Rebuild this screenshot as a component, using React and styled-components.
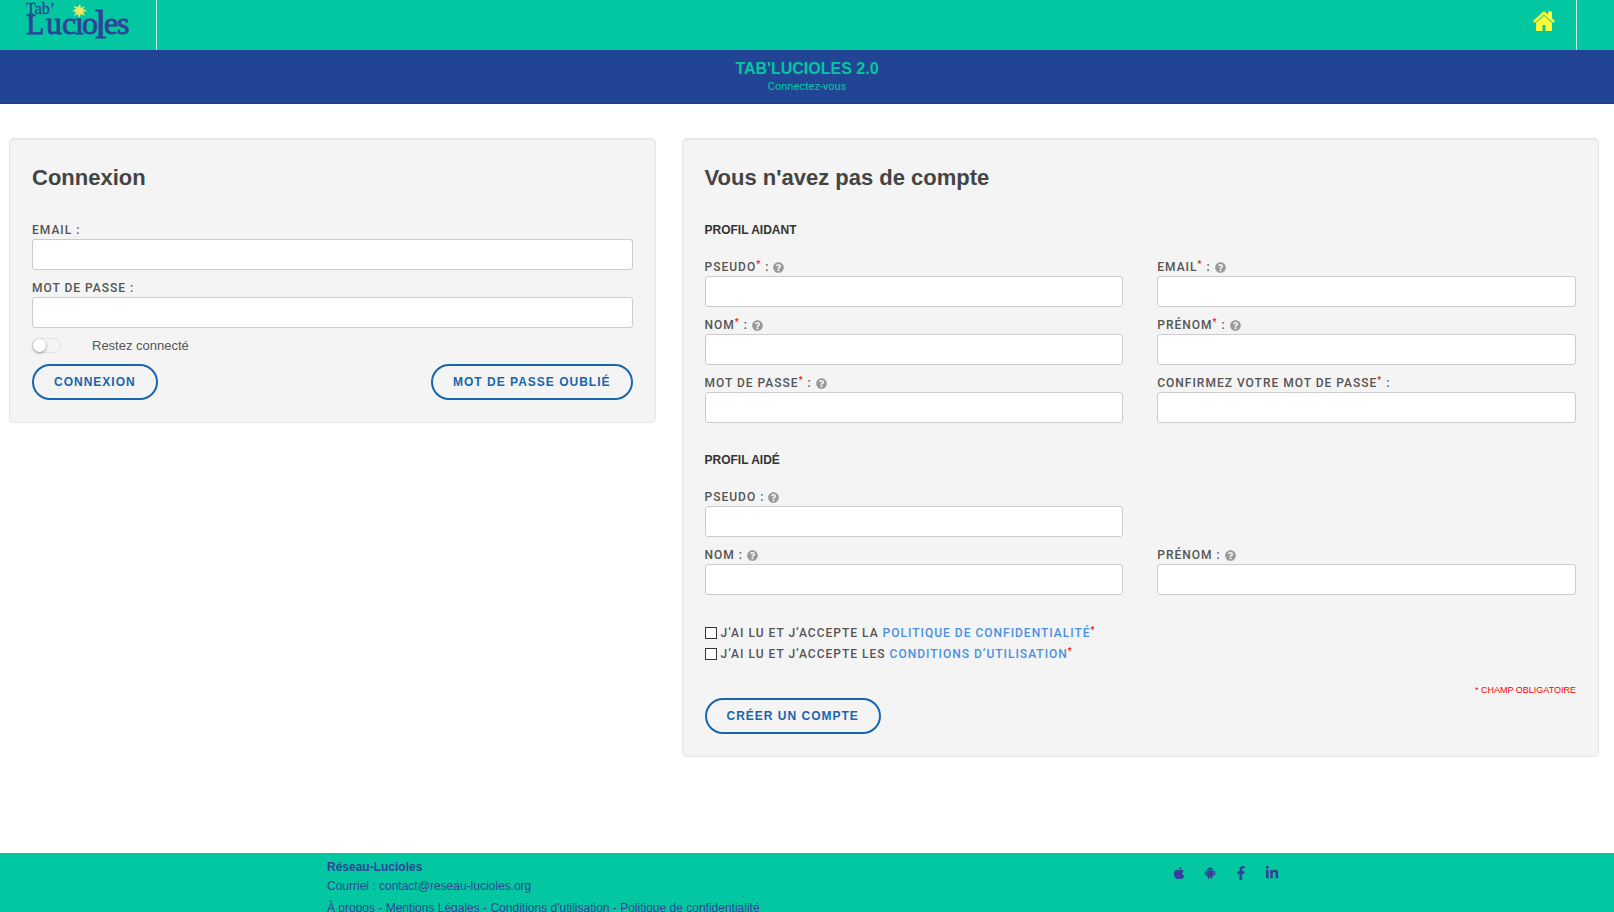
import React from 'react';
import styled, { createGlobalStyle } from 'styled-components';
import { FaApple, FaFacebookF, FaLinkedinIn, FaQuestionCircle } from 'react-icons/fa';
import { AiFillAndroid } from 'react-icons/ai';

const aidantFields = [
  { id: 'aidant-pseudo', label: 'Pseudo', required: true, help: true },
  { id: 'aidant-email', label: 'Email', type: 'email', required: true, help: true },
  { id: 'aidant-nom', label: 'Nom', required: true, help: true },
  { id: 'aidant-prenom', label: 'Prénom', required: true, help: true },
  { id: 'aidant-password', label: 'Mot de passe', type: 'password', required: true, help: true },
  { id: 'aidant-confirm', label: 'Confirmez votre mot de passe', type: 'password', required: true },
];

const aideFields = [
  { id: 'aide-pseudo', label: 'Pseudo', help: true, alone: true },
  { id: 'aide-nom', label: 'Nom', help: true },
  { id: 'aide-prenom', label: 'Prénom', help: true },
];

const Logo = () => (
  <svg width="112" height="46" viewBox="0 0 112 46" role="img" aria-label="Tab'Lucioles">
    <g fill="#2f4199" stroke="#2f4199" strokeWidth="0.8" fontFamily="'Liberation Serif', serif">
      <text x="0" y="14" fontSize="16" strokeWidth="0.3">Tab’</text>
      <text x="0" y="34" fontSize="32">
        <tspan fontSize="30">L</tspan>
        <tspan x="20">u</tspan>
        <tspan x="36">c</tspan>
        <tspan x="49">ı</tspan>
        <tspan x="56">o</tspan>
        <tspan x="69" y="38" fontSize="41">l</tspan>
        <tspan x="78" y="34">e</tspan>
        <tspan x="91">s</tspan>
      </text>
    </g>
    <path
      d="M54 4l1 4 4-2-2 3 4 2-4 1 2 4-4-2-2 4-1-4-4 2 2-4-4-1 4-2-3-3 5 1z"
      fill="#e6ea68"
    />
  </svg>
);

const HomeIcon = () => (
  <svg width="22" height="20" viewBox="0 0 22 20" fill="#fdff38" aria-hidden="true">
    <path d="M11 0L0 10l1.500 2L11 3.800 20.500 12 22 10 19 7.200V0.500h-4v3.200z" />
    <path d="M11 4.800L3 11.800V20h6.500v-6h3v6H19v-8.200z" />
  </svg>
);

const Field = ({ id, label, type = 'text', required, help, alone }) => (
  <FieldGroup $alone={alone}>
    <FieldLabel htmlFor={id}>
      <span>
        {label}
        {required && <Star>*</Star>} :
      </span>
      {help && <HelpIcon aria-label="Aide" />}
    </FieldLabel>
    <Input id={id} type={type} />
  </FieldGroup>
);

const App = () => {
  return (
    <>
      <GlobalStyle />
      <Header>
        <LogoLink href="#">
          <Logo />
        </LogoLink>
        <HomeLink href="#" aria-label="Accueil">
          <HomeIcon />
        </HomeLink>
      </Header>
      <Banner>
        <BannerTitle>TAB'LUCIOLES 2.0</BannerTitle>
        <BannerText>Connectez-vous</BannerText>
      </Banner>

      <Main>
        <LoginColumn>
          <Panel>
            <PanelTitle>Connexion</PanelTitle>
            <Field id="login-email" label="Email" type="email" />
            <Field id="login-password" label="Mot de passe" type="password" />
            <StayRow>
              <Toggle id="stay" type="checkbox" />
              <label htmlFor="stay">Restez connecté</label>
            </StayRow>
            <ButtonRow>
              <Button type="button">Connexion</Button>
              <Button type="button">Mot de passe oublié</Button>
            </ButtonRow>
          </Panel>
        </LoginColumn>

        <SignupColumn>
          <Panel>
            <PanelTitle>Vous n'avez pas de compte</PanelTitle>
            <ProfileTitle>Profil aidant</ProfileTitle>
            <FieldGrid>
              {aidantFields.map((field) => (
                <Field key={field.id} {...field} />
              ))}
            </FieldGrid>
            <ProfileTitle $spaced>Profil aidé</ProfileTitle>
            <FieldGrid>
              {aideFields.map((field) => (
                <Field key={field.id} {...field} />
              ))}
            </FieldGrid>
            <Consents>
              <ConsentRow>
                <Checkbox id="privacy" type="checkbox" />
                <ConsentLabel htmlFor="privacy">
                  J‘ai lu et j‘accepte la <TextLink href="#">politique de confidentialité</TextLink>
                  <Star>*</Star>
                </ConsentLabel>
              </ConsentRow>
              <ConsentRow>
                <Checkbox id="terms" type="checkbox" />
                <ConsentLabel htmlFor="terms">
                  J‘ai lu et j‘accepte les <TextLink href="#">conditions d‘utilisation</TextLink>
                  <Star>*</Star>
                </ConsentLabel>
              </ConsentRow>
            </Consents>
            <RequiredNote>* Champ obligatoire</RequiredNote>
            <Button type="button">Créer un compte</Button>
          </Panel>
        </SignupColumn>
      </Main>

      <Footer>
        <FooterInner>
          <div>
            <FooterName>Réseau-Lucioles</FooterName>
            <FooterLine>
              Courriel : <a href="mailto:contact@reseau-lucioles.org">contact@reseau-lucioles.org</a>
            </FooterLine>
            <FooterLine>
              <a href="#">À propos</a> - <a href="#">Mentions Légales</a> -{' '}
              <a href="#">Conditions d'utilisation</a> - <a href="#">Politique de confidentialité</a>
            </FooterLine>
          </div>
          <Socials>
            <SocialLink href="#" aria-label="Apple">
              <FaApple />
            </SocialLink>
            <SocialLink href="#" aria-label="Android">
              <AiFillAndroid />
            </SocialLink>
            <SocialLink href="#" aria-label="Facebook">
              <FaFacebookF />
            </SocialLink>
            <SocialLink href="#" aria-label="LinkedIn">
              <FaLinkedinIn />
            </SocialLink>
          </Socials>
        </FooterInner>
      </Footer>
    </>
  );
};

export default App;

const GlobalStyle = createGlobalStyle`
  * {
    box-sizing: border-box;
  }

  html {
    scrollbar-width: none;
  }

  body {
    margin: 0;
    background: #fff;
    color: #555;
    font-family: 'Liberation Sans', Arial, sans-serif;
    font-size: 13px;
  }

  a {
    color: inherit;
    text-decoration: none;
  }
`;

const Header = styled.header`
  display: flex;
  justify-content: space-between;
  height: 50px;
  padding-right: 37px;
  background: #02c7a1;
`;

const LogoLink = styled.a`
  display: flex;
  width: 157px;
  padding-left: 26px;
  border-right: 1px solid #c4ece2;
`;

const HomeLink = styled.a`
  padding: 11px 21px 0;
  border-right: 1px solid #c4ece2;
`;

const Banner = styled.div`
  height: 54px;
  padding-top: 9px;
  background: #214594;
  border-bottom: 1px solid #173a8a;
  color: #02c7a1;
  text-align: center;
`;

const BannerTitle = styled.h1`
  margin: 0;
  font-size: 16px;
  line-height: 20px;
`;

const BannerText = styled.p`
  margin: 0;
  font-family: Roboto, sans-serif;
  font-size: 11px;
  line-height: 15px;
`;

const Main = styled.main`
  display: grid;
  grid-template-columns: 5fr 7fr;
  align-items: start;
  padding: 34px 0 96px;
`;

const LoginColumn = styled.div`
  padding: 0 17px 0 9px;
`;

const SignupColumn = styled.div`
  padding: 0 15px 0 9px;
`;

const Panel = styled.form`
  padding: 22px;
  background: #f4f4f4;
  border: 1px solid #e5e5e5;
  border-radius: 5px;
  box-shadow: inset 0 1px 1px rgba(0, 0, 0, 0.05);
`;

const PanelTitle = styled.h2`
  margin: 0 0 26px;
  color: #444;
  font-size: 22px;
  line-height: 34px;
`;

const ProfileTitle = styled.h3`
  margin: ${({ $spaced }) => ($spaced ? '19px' : '0')} 0 19px;
  color: #333;
  font-size: 12px;
  line-height: 18px;
  text-transform: uppercase;
`;

const FieldGrid = styled.div`
  display: grid;
  grid-template-columns: 1fr 1fr;
  column-gap: 34px;
`;

const FieldGroup = styled.div`
  margin-bottom: 9px;

  ${({ $alone }) =>
    $alone &&
    `
    grid-column: 1 / -1;
    width: calc(50% - 17px);
  `}
`;

const FieldLabel = styled.label`
  display: flex;
  align-items: center;
  gap: 4px;
  height: 18px;
  font-family: Roboto, sans-serif;
  font-size: 12px;
  font-weight: 500;
  letter-spacing: 1px;
  line-height: 18px;
  text-transform: uppercase;
`;

const HelpIcon = styled(FaQuestionCircle)`
  width: 11px;
  height: 11px;
  color: #999;
`;

const Star = styled.span`
  color: #f00;
  font-size: 9px;
  line-height: 1;
  vertical-align: 4px;
`;

const Input = styled.input`
  display: block;
  width: 100%;
  height: 31px;
  padding: 0 8px;
  background: #fff;
  border: 1px solid #ccc;
  border-radius: 3px;
  font: inherit;
`;

const StayRow = styled.div`
  display: flex;
  align-items: center;
  gap: 31px;
  height: 16px;
  margin-bottom: 11px;
`;

const Toggle = styled.input`
  appearance: none;
  display: flex;
  width: 29px;
  height: 15px;
  margin: 0;
  border: 1px solid #e2e2e2;
  border-radius: 8px;

  &::before {
    content: '';
    width: 13px;
    height: 13px;
    border-radius: 50%;
    background: #fff;
    box-shadow: 0 1px 3px rgba(0, 0, 0, 0.4);
  }

  &:checked {
    justify-content: flex-end;
    background: #02c7a1;
  }
`;

const ButtonRow = styled.div`
  display: flex;
  justify-content: space-between;
`;

const Button = styled.button`
  height: 36px;
  padding: 0 20px;
  background: transparent;
  border: 2px solid #1766ae;
  border-radius: 18px;
  color: #1766ae;
  font-family: inherit;
  font-size: 12px;
  font-weight: bold;
  letter-spacing: 1px;
  text-transform: uppercase;
  cursor: pointer;
`;

const Consents = styled.div`
  margin: 18px 0 20px;
`;

const ConsentRow = styled.div`
  display: flex;
  align-items: center;
  gap: 4px;
  height: 21px;
`;

const Checkbox = styled.input`
  appearance: none;
  width: 12px;
  height: 12px;
  margin: 0;
  background: #fff;
  border: 1px solid #333;

  &:checked {
    background: #1766ae;
  }
`;

const ConsentLabel = styled.label`
  font-family: Roboto, sans-serif;
  font-size: 12px;
  font-weight: 500;
  letter-spacing: 1px;
  line-height: 20px;
  text-transform: uppercase;
`;

const TextLink = styled.a`
  color: #4a90e2;
`;

const RequiredNote = styled.p`
  margin: 0 0 2px;
  color: #f00;
  font-size: 9px;
  line-height: 12px;
  text-align: right;
  text-transform: uppercase;
`;

const Footer = styled.footer`
  padding-top: 5px;
  background: #02c7a1;
  color: #35409a;
  font-size: 12px;
`;

const FooterInner = styled.div`
  display: flex;
  justify-content: space-between;
  max-width: 960px;
  margin: 0 auto;
`;

const FooterName = styled.strong`
  display: block;
  line-height: 18px;
`;

const FooterLine = styled.p`
  margin: 0 0 2px;
  line-height: 20px;
`;

const Socials = styled.div`
  display: flex;
  padding-top: 8px;
`;

const SocialLink = styled.a`
  display: flex;
  justify-content: center;
  width: 31px;
  font-size: 14px;
`;
